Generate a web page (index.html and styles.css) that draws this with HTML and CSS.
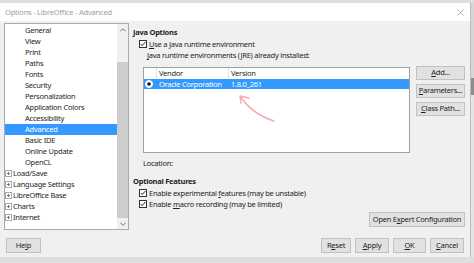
FILE: index.html
```html
<!DOCTYPE html>
<html lang="en">
<head>
    <meta charset="UTF-8">
    <title>Options - LibreOffice - Advanced</title>
    <link rel="stylesheet" href="styles.css">
</head>
<body>
<div class="desktop">
    <div class="window">
        <!-- Title bar -->
        <div class="titlebar">
            <span class="title">Options - LibreOffice - Advanced</span>
            <svg class="close" viewBox="0 0 7 7"><path d="M0.5 0.5 L6.5 6.5 M6.5 0.5 L0.5 6.5"/></svg>
        </div>

        <div class="dialog">
            <div class="main">
                <!-- Left: options tree -->
                <div class="tree">
                    <ul class="tree-list">
                        <li class="child">General</li>
                        <li class="child">View</li>
                        <li class="child">Print</li>
                        <li class="child">Paths</li>
                        <li class="child">Fonts</li>
                        <li class="child">Security</li>
                        <li class="child">Personalization</li>
                        <li class="child">Application Colors</li>
                        <li class="child">Accessibility</li>
                        <li class="child selected">Advanced</li>
                        <li class="child">Basic IDE</li>
                        <li class="child">Online Update</li>
                        <li class="child">OpenCL</li>
                        <li class="parent"><svg class="plus" viewBox="0 0 7 7"><rect x="0.5" y="0.5" width="6" height="6"/><path d="M2 3.5 H5 M3.5 2 V5"/></svg>Load/Save</li>
                        <li class="parent"><svg class="plus" viewBox="0 0 7 7"><rect x="0.5" y="0.5" width="6" height="6"/><path d="M2 3.5 H5 M3.5 2 V5"/></svg>Language Settings</li>
                        <li class="parent"><svg class="plus" viewBox="0 0 7 7"><rect x="0.5" y="0.5" width="6" height="6"/><path d="M2 3.5 H5 M3.5 2 V5"/></svg>LibreOffice Base</li>
                        <li class="parent"><svg class="plus" viewBox="0 0 7 7"><rect x="0.5" y="0.5" width="6" height="6"/><path d="M2 3.5 H5 M3.5 2 V5"/></svg>Charts</li>
                        <li class="parent"><svg class="plus" viewBox="0 0 7 7"><rect x="0.5" y="0.5" width="6" height="6"/><path d="M2 3.5 H5 M3.5 2 V5"/></svg>Internet</li>
                    </ul>
                    <div class="scrollbar">
                        <div class="arrow up"><svg viewBox="0 0 7 4"><polyline points="0.5,3.5 3.5,0.5 6.5,3.5"/></svg></div>
                        <div class="track"><div class="thumb"></div></div>
                        <div class="arrow down"><svg viewBox="0 0 7 4"><polyline points="0.5,0.5 3.5,3.5 6.5,0.5"/></svg></div>
                    </div>
                </div>

                <!-- Right: Java options -->
                <div class="pane">
                    <div class="heading">Java Options</div>
                    <div class="check">
                        <svg class="box" viewBox="0 0 8 8"><rect x="0.5" y="0.5" width="7" height="7"/><polyline points="1.6,4 3.2,5.6 6.4,2"/></svg>
                        <span><u>U</u>se a Java runtime environment</span>
                    </div>
                    <div class="sub-label"><u>J</u>ava runtime environments (JRE) already installed:</div>

                    <div class="jre-row">
                        <div class="jre-table">
                            <div class="jre-head">
                                <span class="col-radio"></span>
                                <span class="col-vendor">Vendor</span>
                                <span class="col-version">Version</span>
                            </div>
                            <div class="jre-item selected">
                                <span class="col-radio"><svg class="radio" viewBox="0 0 8 8"><circle cx="4" cy="4" r="3.5" class="ring"/><circle cx="4" cy="4" r="1.8" class="dot"/></svg></span>
                                <span class="col-vendor">Oracle Corporation</span>
                                <span class="col-version">1.8.0_261</span>
                            </div>
                            <svg class="scribble" viewBox="0 0 140 60"><path d="M96 28 Q108 46 130 53 M96 28 L97 35 M96 28 L105 30"/></svg>
                        </div>
                        <div class="side-buttons">
                            <button class="btn"><u>A</u>dd...</button>
                            <button class="btn"><u>P</u>arameters...</button>
                            <button class="btn"><u>C</u>lass Path...</button>
                        </div>
                    </div>

                    <div class="location">Location:</div>

                    <div class="heading second">Optional Features</div>
                    <div class="check">
                        <svg class="box" viewBox="0 0 8 8"><rect x="0.5" y="0.5" width="7" height="7"/><polyline points="1.6,4 3.2,5.6 6.4,2"/></svg>
                        <span>Enable experimental <u>f</u>eatures (may be unstable)</span>
                    </div>
                    <div class="check">
                        <svg class="box" viewBox="0 0 8 8"><rect x="0.5" y="0.5" width="7" height="7"/><polyline points="1.6,4 3.2,5.6 6.4,2"/></svg>
                        <span>Enable <u>m</u>acro recording (may be limited)</span>
                    </div>
                    <div class="expert-row">
                        <button class="btn expert">Open E<u>x</u>pert Configuration</button>
                    </div>
                </div>
            </div>

            <!-- Bottom buttons -->
            <div class="footer">
                <button class="btn help">He<u>l</u>p</button>
                <div class="spacer"></div>
                <button class="btn reset">R<u>e</u>set</button>
                <button class="btn apply"><u>A</u>pply</button>
                <button class="btn ok"><u>O</u>K</button>
                <button class="btn cancel"><u>C</u>ancel</button>
            </div>
        </div>
    </div>

    <!-- edge of the window behind -->
    <div class="edge">
        <div class="edge-top"></div>
        <div class="edge-dark"></div>
        <div class="edge-rest"></div>
    </div>
</div>
</body>
</html>
```

FILE: styles.css
```css
html, body {
    margin: 0;
    padding: 0;
}

body {
    width: 474px;
    height: 263px;
    overflow: hidden;
    background: #dedede;
    font-family: "Noto Sans", "Open Sans", sans-serif;
    font-size: 7.5px;
    letter-spacing: -0.25px;
    color: #1e1e1e;
}

.desktop {
    display: flex;
    padding-top: 3px;
}

.window {
    width: 471px;
    height: 254px;
    box-sizing: border-box;
    border-right: 1px solid #bcbcbc;
    background: #f0f0f0;
    display: flex;
    flex-direction: column;
}

.titlebar {
    height: 18px;
    background: #fff;
    display: flex;
    align-items: center;
    justify-content: space-between;
    padding: 0 6px 0 5px;
}

.title {
    color: #a0a0a0;
    font-size: 7.6px;
}

.close {
    width: 7px;
    height: 7px;
}

.close path {
    stroke: #9a9a9a;
    stroke-width: 0.8;
    fill: none;
}

.dialog {
    flex: 1;
    display: flex;
    flex-direction: column;
    padding: 2px 0 4px 4px;
}

.main {
    display: flex;
    height: 207px;
}

/* tree */
.tree {
    width: 125px;
    height: 207px;
    box-sizing: border-box;
    border: 1px solid #aaaaaa;
    background: #fff;
    display: flex;
}

.tree-list {
    list-style: none;
    margin: 0;
    padding: 1px 0 0 0;
    width: 112px;
}

.tree-list li {
    height: 11px;
    line-height: 11px;
    white-space: nowrap;
    display: flex;
    align-items: center;
}

.tree-list .child {
    padding-left: 20px;
}

.tree-list .parent {
    padding-left: 0;
}

.tree-list .selected {
    background: #3399ff;
    color: #fff;
}

.plus {
    width: 7px;
    height: 7px;
    margin-right: 1px;
}

.plus rect {
    fill: #fff;
    stroke: #a8a8a8;
    stroke-width: 1;
}

.plus path {
    stroke: #777;
    stroke-width: 1;
}

.scrollbar {
    width: 11px;
    background: #f0f0f0;
    display: flex;
    flex-direction: column;
}

.arrow {
    display: flex;
    align-items: center;
    justify-content: center;
}

.arrow.up {
    height: 12px;
}

.arrow.down {
    height: 10px;
}

.arrow svg {
    width: 6px;
    height: 4px;
}

.arrow polyline {
    fill: none;
    stroke: #606060;
    stroke-width: 1;
}

.track {
    flex: 1;
    display: flex;
    flex-direction: column;
    padding: 26px 0 1px 0;
}

.thumb {
    flex: 1;
    background: #cdcdcd;
}

/* right pane */
.pane {
    width: 332px;
    margin-left: 4px;
    display: flex;
    flex-direction: column;
}

.heading {
    font-weight: bold;
    height: 12px;
    line-height: 12px;
    margin-top: 3px;
}

.heading.second {
    margin-top: 6px;
}

.check {
    display: flex;
    align-items: center;
    height: 11px;
    padding-left: 6px;
}

.box {
    width: 8px;
    height: 8px;
    margin-right: 2px;
}

.box rect {
    fill: #fff;
    stroke: #333;
    stroke-width: 1;
}

.box polyline {
    fill: none;
    stroke: #222;
    stroke-width: 1;
}

.sub-label {
    height: 11px;
    line-height: 11px;
    margin: 1px 0 0 14px;
}

.jre-row {
    display: flex;
    margin-top: 5px;
    height: 87px;
}

.jre-table {
    position: relative;
    width: 267px;
    height: 86px;
    margin: 1px 0 0 10px;
    box-sizing: border-box;
    border: 1px solid #a0a0a0;
    background: #fff;
}

.jre-head, .jre-item {
    display: flex;
    height: 11px;
    line-height: 11px;
}

.jre-item {
    height: 10px;
    line-height: 10px;
}

.jre-item.selected {
    background: #3399ff;
    color: #fff;
}

.col-radio {
    width: 13px;
    display: flex;
    align-items: center;
    padding-left: 1px;
    box-sizing: border-box;
}

.col-vendor {
    width: 72px;
    padding-left: 2px;
    box-sizing: border-box;
}

.col-version {
    padding-left: 2px;
}

.jre-head .col-radio,
.jre-head .col-vendor {
    border-right: 1px solid #e3e3e3;
}

.radio {
    width: 8px;
    height: 8px;
}

.radio .ring {
    fill: #fff;
    stroke: #fff;
}

.radio .dot {
    fill: #111;
}

.scribble {
    position: absolute;
    left: 0;
    top: 0;
    width: 140px;
    height: 60px;
}

.scribble path {
    fill: none;
    stroke: #f2a9b2;
    stroke-width: 1.4;
    stroke-linecap: round;
}

.side-buttons {
    margin-left: 6px;
    width: 49px;
    display: flex;
    flex-direction: column;
    gap: 4px;
}

.btn {
    font-family: inherit;
    font-size: inherit;
    letter-spacing: inherit;
    color: #1e1e1e;
    background: #e1e1e1;
    border: 1px solid #c2c2c2;
    box-sizing: border-box;
    height: 15px;
    padding: 0;
    margin: 0;
    line-height: 1;
    white-space: nowrap;
}

.side-buttons .btn {
    height: 14px;
}

.location {
    height: 11px;
    line-height: 11px;
    margin: 5px 0 0 10px;
}

.expert-row {
    display: flex;
    justify-content: flex-end;
    margin-top: 3px;
}

.btn.expert {
    width: 96px;
}

/* footer */
.footer {
    display: flex;
    gap: 4px;
    margin-top: 8px;
    padding: 0 6px 0 2px;
}

.spacer {
    flex: 1;
}

.btn.help {
    width: 35px;
}

.btn.reset {
    width: 30px;
}

.btn.apply {
    width: 34px;
}

.btn.ok {
    width: 33px;
}

.btn.cancel {
    width: 34px;
}

/* behind-window edge */
.edge {
    width: 3px;
    display: flex;
    flex-direction: column;
}

.edge-top {
    height: 75px;
    background: #d6d6d6;
}

.edge-dark {
    height: 17px;
    background: #8d8d8d;
}

.edge-rest {
    flex: 1;
    background: #e4e4e4;
}
```
